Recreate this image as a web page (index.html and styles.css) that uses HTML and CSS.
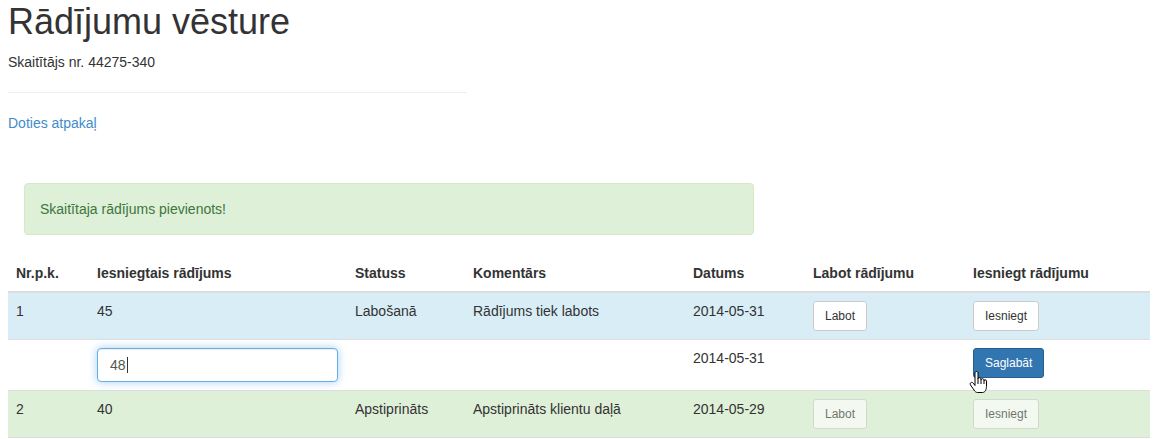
FILE: index.html
```html
<!DOCTYPE html>
<html lang="lv">
<head>
<meta charset="utf-8">
<title>Rādījumu vēsture</title>
<link rel="stylesheet" href="styles.css">
</head>
<body>
<h1 class="title">Rādījumu vēsture</h1>
<p class="meter">Skaitītājs nr. 44275-340</p>
<hr class="divider">
<p class="back"><a href="#" class="back-link">Doties atpakaļ</a></p>

<div class="alert">Skaitītaja rādījums pievienots!</div>

<table class="readings">
  <colgroup>
    <col class="c-nr">
    <col class="c-val">
    <col class="c-status">
    <col class="c-comment">
    <col class="c-date">
    <col class="c-edit">
    <col class="c-submit">
  </colgroup>
  <thead>
    <tr>
      <th>Nr.p.k.</th>
      <th>Iesniegtais rādījums</th>
      <th>Statuss</th>
      <th>Komentārs</th>
      <th>Datums</th>
      <th>Labot rādījumu</th>
      <th>Iesniegt rādījumu</th>
    </tr>
  </thead>
  <tbody>
    <tr class="info">
      <td>1</td>
      <td>45</td>
      <td>Labošanā</td>
      <td>Rādījums tiek labots</td>
      <td>2014-05-31</td>
      <td><button class="btn">Labot</button></td>
      <td><button class="btn">Iesniegt</button></td>
    </tr>
    <tr>
      <td></td>
      <td><div class="field">48<span class="text-caret"></span></div></td>
      <td></td>
      <td></td>
      <td>2014-05-31</td>
      <td></td>
      <td><span class="cursor-wrap"><button class="btn btn-primary">Saglabāt</button><svg class="hand" width="19" height="23" viewBox="0 0 19 23"><path d="M6,2 C6,1.2 6.7,0.5 7.5,0.5 C8.3,0.5 9,1.2 9,2 L9,8 C9,7.2 9.7,6.7 10.5,6.7 C11.3,6.7 12,7.2 12,8 L12,9 C12,8.2 12.7,7.7 13.5,7.7 C14.3,7.7 15,8.2 15,9 L15,10 C15,9.2 15.6,8.8 16.2,8.8 C16.9,8.8 17.5,9.3 17.5,10.1 L17.5,15.5 C17.5,18.5 16,21.5 13.5,21.5 L8.5,21.5 C7,21.5 6,20.5 5,19 L1.5,14 C0.9,13.1 1.1,12.1 1.9,11.6 C2.7,11.1 3.7,11.4 4.3,12.2 L6,14.5 Z" fill="#fff" stroke="#000" stroke-width="1" stroke-linejoin="round"/><path d="M9,8 L9,13 M12,9 L12,13 M15,10 L15,13" stroke="#000" stroke-width="1" fill="none"/></svg></span></td>
    </tr>
    <tr class="success">
      <td>2</td>
      <td>40</td>
      <td>Apstiprināts</td>
      <td>Apstiprināts klientu daļā</td>
      <td>2014-05-29</td>
      <td><button class="btn" disabled>Labot</button></td>
      <td><button class="btn" disabled>Iesniegt</button></td>
    </tr>
  </tbody>
</table>
</body>
</html>
```

FILE: styles.css
```css
html, body {
  background: #fff;
}
body {
  margin: 0 8px;
  font-family: "Liberation Sans", Arial, Helvetica, sans-serif;
  font-size: 14px;
  line-height: 20px;
  color: #333;
}
.title {
  font-size: 36px;
  font-weight: normal;
  line-height: 1.1;
  margin: 2px 0 10px;
}
.meter {
  margin: 0 0 10px;
}
.divider {
  width: 459px;
  margin: 20px 0;
  border: 0;
  border-top: 1px solid #eee;
  height: 0;
}
.back {
  margin: 0 0 10px;
}
.back-link {
  color: #428bca;
  text-decoration: none;
}
.alert {
  box-sizing: border-box;
  width: 730px;
  margin: 50px 0 20px 16px;
  padding: 15px;
  border: 1px solid #d6e9c6;
  border-radius: 4px;
  background: #dff0d8;
  color: #3c763d;
}
.readings {
  width: 100%;
  table-layout: fixed;
  border-collapse: collapse;
  border-spacing: 0;
  border-bottom: 1px solid #ddd;
}
.c-nr { width: 81px; }
.c-val { width: 258px; }
.c-status { width: 118px; }
.c-comment { width: 220px; }
.c-date { width: 120px; }
.c-edit { width: 160px; }
.readings th,
.readings td {
  padding: 8px;
  line-height: 20px;
  text-align: left;
  vertical-align: top;
  border-top: 1px solid #ddd;
}
.readings th {
  vertical-align: bottom;
  font-weight: bold;
  border-top: 0;
  border-bottom: 2px solid #ddd;
}
.readings tr.info td {
  background: #d9edf7;
}
.readings tr.success td {
  background: #dff0d8;
}
.btn {
  display: inline-block;
  margin: 0;
  padding: 5px 11px;
  font-family: "Liberation Sans", Arial, Helvetica, sans-serif;
  font-size: 12px;
  line-height: 18px;
  color: #333;
  background: #fff;
  border: 1px solid #ccc;
  border-radius: 3px;
  vertical-align: top;
}
.btn[disabled] {
  opacity: 0.65;
}
.btn-primary {
  color: #fff;
  background: #3276b1;
  border-color: #285e8e;
}
.field {
  box-sizing: border-box;
  width: 241px;
  height: 34px;
  padding: 6px 12px;
  font-size: 14px;
  line-height: 20px;
  color: #555;
  background: #fff;
  border: 1px solid #66afe9;
  border-radius: 4px;
  box-shadow: inset 0 1px 1px rgba(0, 0, 0, .075), 0 0 8px rgba(102, 175, 233, .6);
}
.text-caret {
  display: inline-block;
  width: 1px;
  height: 16px;
  margin-left: 1px;
  background: #333;
  vertical-align: -3px;
}
.cursor-wrap {
  position: relative;
  display: inline-block;
}
.hand {
  position: absolute;
  left: -4px;
  top: 23px;
}
```
